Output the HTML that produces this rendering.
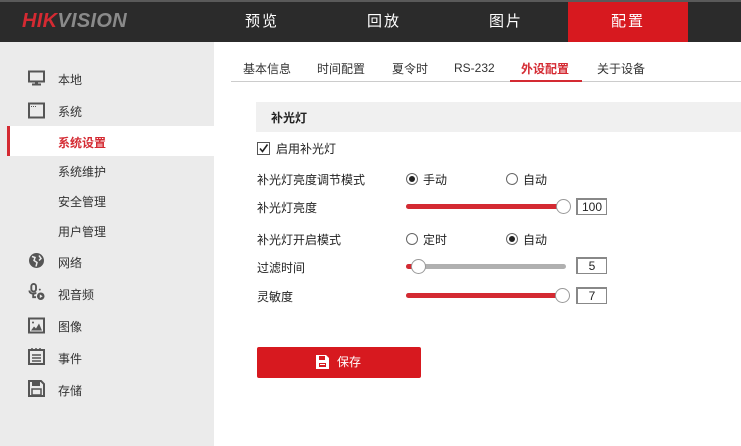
<!DOCTYPE html>
<html><head><meta charset="utf-8"><style>
*{margin:0;padding:0;box-sizing:border-box}
body{width:741px;height:446px;overflow:hidden;background:#fff;font-family:"Liberation Sans","Noto Sans CJK SC",sans-serif;font-size:12px;color:#222;position:relative}
.hd{position:absolute;left:0;top:0;width:741px;height:42px;background:#2b2b2b;border-top:2px solid #5a5a5a}
.logo{position:absolute;left:22px;top:8px;font-size:20px;font-weight:bold;font-style:italic;letter-spacing:0.3px}
.nav{position:absolute;top:0;height:40px;line-height:40px;width:120px;text-align:center;color:#fff;font-size:15px;letter-spacing:2px}
.sb{position:absolute;left:0;top:42px;width:214px;height:404px;background:#ebebeb}
.it{position:absolute;left:58px;font-size:12px;color:#333}
.ic{position:absolute;left:28px;width:17px;height:17px}
.sel{position:absolute;left:7px;top:126px;width:207px;height:30px;background:#fff;border-left:3px solid #d42a32}
.tab{position:absolute;top:60px;font-size:12px;color:#333}
.lbl{position:absolute;left:257px;font-size:12px;color:#222}
.radio{position:absolute;width:12px;height:12px;border:1px solid #666;border-radius:50%}
.radio.on::after{content:"";position:absolute;left:2px;top:2px;width:6px;height:6px;border-radius:50%;background:#222}
.rt{position:absolute;font-size:12px}
.track{position:absolute;left:406px;width:160px;height:5px;border-radius:3px;background:#b0b0b0}
.fill{position:absolute;left:0;top:0;height:5px;border-radius:3px;background:#d42a32}
.knob{position:absolute;width:15px;height:15px;border-radius:50%;background:#fff;border:1px solid #999}
.box{position:absolute;left:576px;width:31px;height:17px;border:1px solid #888;border-left-width:2px;border-top-width:2px;text-align:center;font-size:12px;line-height:14px;background:#fff}
</style></head><body>
<div class="hd">
<div class="logo"><span style="color:#d42a32">HIK</span><span style="color:#8a8a8a">VISION</span></div>
<div class="nav" style="left:202px">预览</div>
<div class="nav" style="left:324px">回放</div>
<div class="nav" style="left:446px">图片</div>
<div class="nav" style="left:568px;background:#d7191f">配置</div>
</div>
<div class="sb"></div>
<div class="sel"></div>
<svg class="ic" style="top:70px" viewBox="0 0 17 16"><rect x="1" y="1" width="15" height="10" fill="none" stroke="#555" stroke-width="2"/><rect x="7" y="11" width="3" height="3" fill="#555"/><rect x="4" y="13" width="9" height="2" fill="#555"/></svg>
<div class="it" style="top:71px">本地</div>
<svg class="ic" style="top:102px" viewBox="0 0 17 16"><rect x="1" y="1" width="15" height="14" fill="none" stroke="#555" stroke-width="2"/><path d="M3 4h6" stroke="#555" stroke-dasharray="1 1"/></svg>
<div class="it" style="top:103px">系统</div>
<div class="it" style="top:134px;color:#d42a32;font-weight:bold">系统设置</div>
<div class="it" style="top:163px">系统维护</div>
<div class="it" style="top:193px">安全管理</div>
<div class="it" style="top:223px">用户管理</div>
<svg class="ic" style="top:252px" viewBox="0 0 17 16"><circle cx="8.5" cy="8" r="7.5" fill="#555"/><path d="M4 4l3 1-1 3 3 2-1 4M11 3l2 3-2 2" stroke="#ebebeb" stroke-width="1.5" fill="none"/></svg>
<div class="it" style="top:254px">网络</div>
<svg class="ic" style="top:283px" viewBox="0 0 17 18"><rect x="3" y="1" width="5" height="8" rx="2.5" fill="none" stroke="#555" stroke-width="2"/><path d="M1 8c0 4 6 4 7 2M5 12v3h3" stroke="#555" stroke-width="2" fill="none"/><circle cx="13" cy="14" r="4" fill="#555"/><path d="M12 12l3 2-3 2z" fill="#ebebeb"/><circle cx="12" cy="7" r="1" fill="#555"/></svg>
<div class="it" style="top:286px">视音频</div>
<svg class="ic" style="top:317px" viewBox="0 0 17 16"><rect x="1" y="1" width="15" height="14" fill="none" stroke="#555" stroke-width="2"/><path d="M3 13l3-4 2 2 3-5 3 7z" fill="#555"/><circle cx="5" cy="5" r="1" fill="#555"/></svg>
<div class="it" style="top:318px">图像</div>
<svg class="ic" style="top:348px" viewBox="0 0 17 17"><rect x="1" y="2" width="15" height="14" fill="none" stroke="#555" stroke-width="2"/><path d="M4 0v3M8 0v3M12 0v3M4 7h9M4 10h9M4 13h9" stroke="#555" stroke-width="1.5"/></svg>
<div class="it" style="top:350px">事件</div>
<svg class="ic" style="top:380px" viewBox="0 0 17 17"><path d="M1 1h12l3 3v12H1z" fill="none" stroke="#555" stroke-width="2"/><rect x="4" y="2" width="8" height="4" fill="#555"/><rect x="4" y="9" width="9" height="6" fill="none" stroke="#555" stroke-width="1.5"/></svg>
<div class="it" style="top:382px">存储</div>

<div class="tab" style="left:243px">基本信息</div>
<div class="tab" style="left:317px">时间配置</div>
<div class="tab" style="left:392px">夏令时</div>
<div class="tab" style="left:454px;top:61px">RS-232</div>
<div class="tab" style="left:521px;color:#d42a32;font-weight:bold">外设配置</div>
<div class="tab" style="left:597px">关于设备</div>
<div style="position:absolute;left:231px;top:81px;width:510px;height:1px;background:#ccc"></div>
<div style="position:absolute;left:510px;top:80px;width:72px;height:2px;background:#d42a32"></div>

<div style="position:absolute;left:256px;top:102px;width:485px;height:30px;background:#f0f0f0"></div>
<div style="position:absolute;left:271px;top:109px;font-weight:bold">补光灯</div>
<svg style="position:absolute;left:257px;top:142px" width="13" height="13" viewBox="0 0 13 13"><rect x="0.5" y="0.5" width="12" height="12" fill="#fff" stroke="#555"/><path d="M3 6.5l2.5 3 5-7" fill="none" stroke="#222" stroke-width="1.6"/></svg>
<div class="lbl" style="left:276px;top:140px">启用补光灯</div>

<div class="lbl" style="top:171px">补光灯亮度调节模式</div>
<div class="radio on" style="left:406px;top:173px"></div><div class="rt" style="left:423px;top:171px">手动</div>
<div class="radio" style="left:506px;top:173px"></div><div class="rt" style="left:523px;top:171px">自动</div>

<div class="lbl" style="top:199px">补光灯亮度</div>
<div class="track" style="top:204px"><div class="fill" style="width:160px"></div></div>
<div class="knob" style="left:556px;top:199px"></div>
<div class="box" style="top:198px">100</div>

<div class="lbl" style="top:231px">补光灯开启模式</div>
<div class="radio" style="left:406px;top:233px"></div><div class="rt" style="left:423px;top:231px">定时</div>
<div class="radio on" style="left:506px;top:233px"></div><div class="rt" style="left:523px;top:231px">自动</div>

<div class="lbl" style="top:259px">过滤时间</div>
<div class="track" style="top:264px"><div class="fill" style="width:10px"></div></div>
<div class="knob" style="left:411px;top:259px"></div>
<div class="box" style="top:257px">5</div>

<div class="lbl" style="top:288px">灵敏度</div>
<div class="track" style="top:293px"><div class="fill" style="width:160px"></div></div>
<div class="knob" style="left:555px;top:288px"></div>
<div class="box" style="top:287px">7</div>

<div style="position:absolute;left:257px;top:347px;width:164px;height:31px;background:#d7191f;border-radius:2px;color:#fff;font-size:12px;line-height:31px">
<svg style="position:absolute;left:59px;top:8px" width="13" height="14" viewBox="0 0 13 14"><path d="M0 0h10l3 3v11H0z" fill="#fff"/><rect x="3" y="1" width="6" height="4" fill="#d7191f"/><rect x="3" y="8" width="7" height="4" fill="#d7191f"/><rect x="4" y="9" width="5" height="1" fill="#fff"/></svg>
<span style="position:absolute;left:80px;top:0">保存</span></div>
</body></html>
